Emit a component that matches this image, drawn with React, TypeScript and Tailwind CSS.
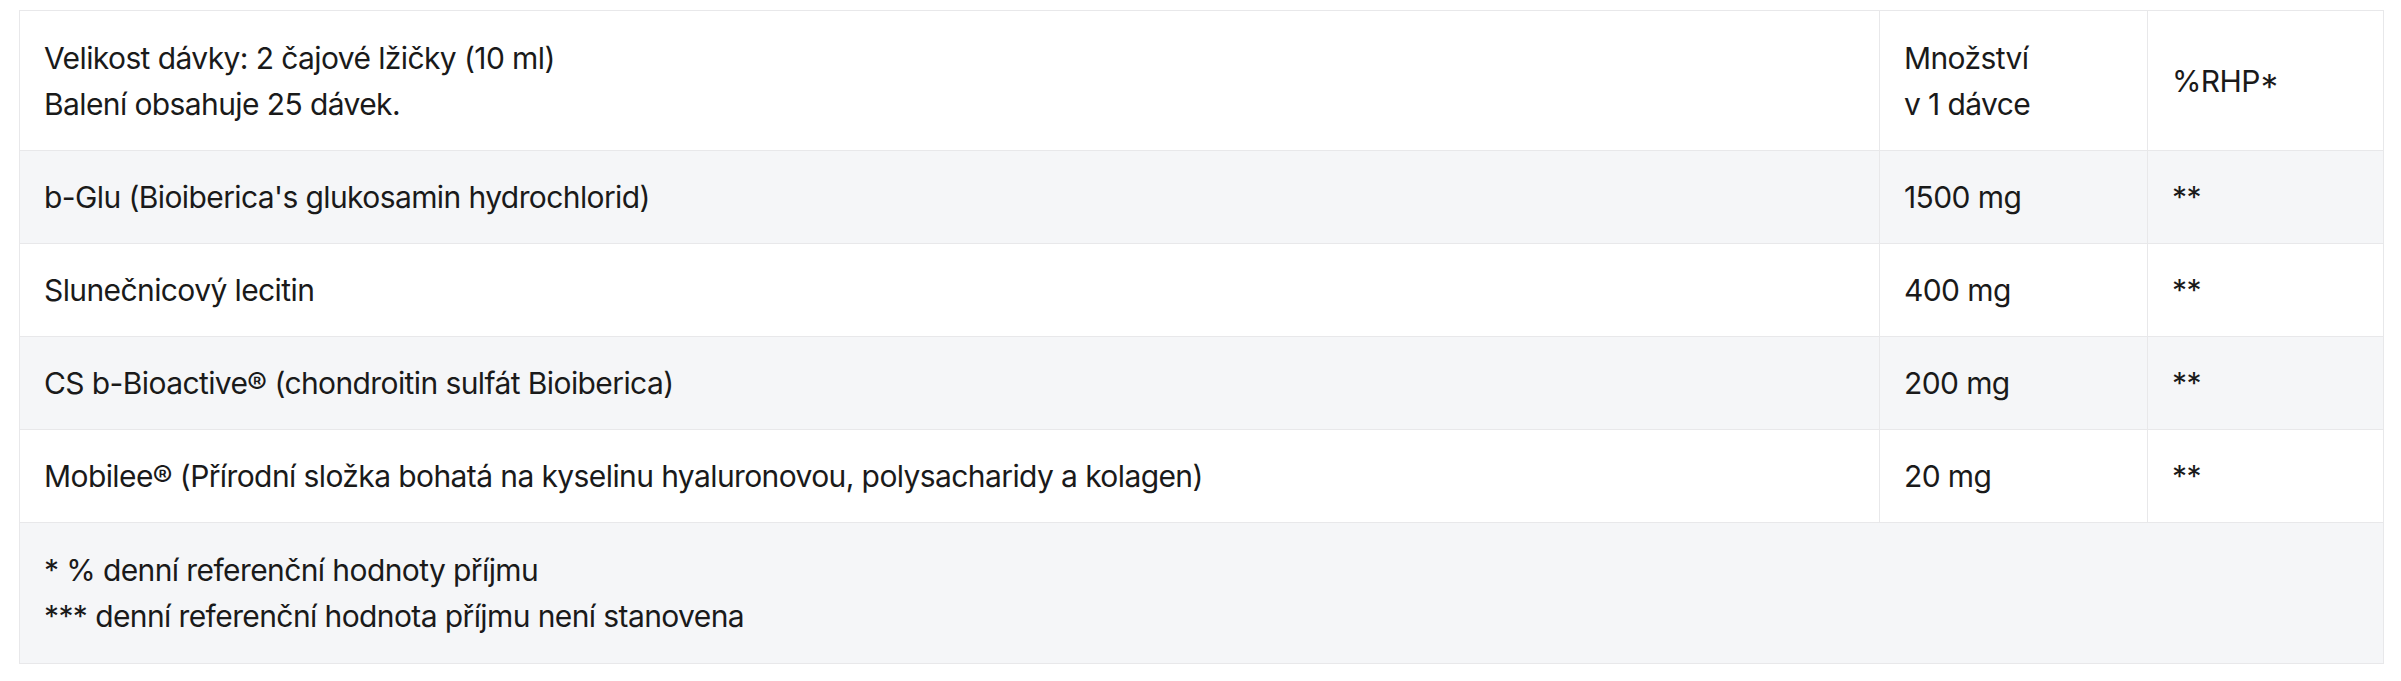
import React from "react";

const rows: { name: string; amount: string; rhp: string }[] = [
  { name: "b-Glu (Bioiberica's glukosamin hydrochlorid)", amount: "1500 mg", rhp: "**" },
  { name: "Slunečnicový lecitin", amount: "400 mg", rhp: "**" },
  { name: "CS b-Bioactive® (chondroitin sulfát Bioiberica)", amount: "200 mg", rhp: "**" },
  { name: "Mobilee® (Přírodní složka bohatá na kyselinu hyaluronovou, polysacharidy a kolagen)", amount: "20 mg", rhp: "**" },
];

const base = "border border-[#e8e8ea] px-6 align-middle";
const cell = base + " py-[23px]";
const tall = base + " pt-6 pb-[23px]";

export default function App() {
  return (
    <div
      className="w-[2401px] h-[681px] bg-white pl-[19px] pt-[10px] text-[30px] leading-[46px] tracking-[-0.6px] text-[#1a1a1a]"
      style={{ fontFamily: "Inter, 'Noto Sans', sans-serif" }}
    >
      <table className="w-[2364px] table-fixed border-collapse">
        <colgroup>
          <col className="w-[1860px]" />
          <col className="w-[268px]" />
          <col className="w-[236px]" />
        </colgroup>
        <tbody>
          <tr className="bg-white">
            <td className={tall}>
              <p>Velikost dávky: 2 čajové lžičky (10 ml)</p>
              <p>Balení obsahuje 25 dávek.</p>
            </td>
            <td className={tall}>
              <p>Množství</p>
              <p>v 1 dávce</p>
            </td>
            <td className={tall + " [font-feature-settings:'case']"}>%RHP*</td>
          </tr>
          {rows.map((r, i) => (
            <tr key={i} className={i % 2 === 0 ? "bg-[#f5f6f8]" : "bg-white"}>
              <td className={cell}>{r.name}</td>
              <td className={cell}>{r.amount}</td>
              <td className={cell}>{r.rhp}</td>
            </tr>
          ))}
          <tr className="bg-[#f5f6f8]">
            <td colSpan={3} className={base + " py-6"}>
              <p>* % denní referenční hodnoty příjmu</p>
              <p>*** denní referenční hodnota příjmu není stanovena</p>
            </td>
          </tr>
        </tbody>
      </table>
    </div>
  );
}
